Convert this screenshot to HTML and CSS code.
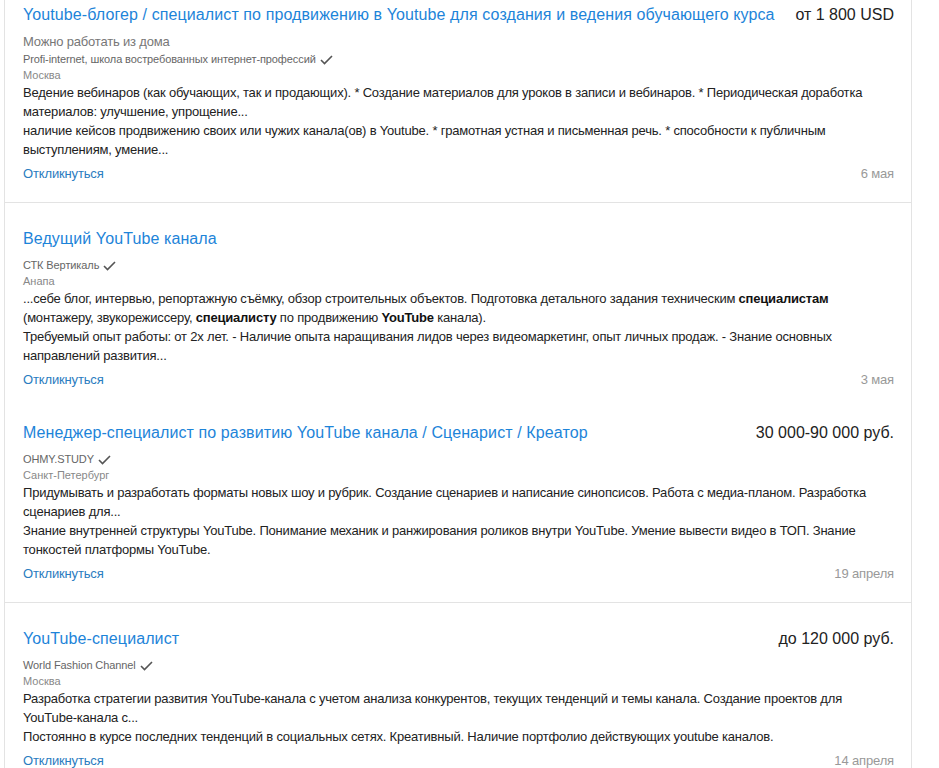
FILE: index.html
```html
<!DOCTYPE html>
<html lang="ru">
<head>
<meta charset="utf-8">
<title>Вакансии</title>
<link rel="stylesheet" href="styles.css">
</head>
<body>
<div class="list">
  <div class="item item--first">
    <div class="head">
      <a class="title" href="#">Youtube-блогер / специалист по продвижению в Youtube для создания и ведения обучающего курса</a>
      <span class="salary">от 1 800 USD</span>
    </div>
    <div class="remote">Можно работать из дома</div>
    <div class="company">Profi-internet, школа востребованных интернет-профессий <svg class="check" width="13" height="10" viewBox="0 0 13 10"><polyline points="1,5 4.5,8.5 12,1" fill="none" stroke="#555" stroke-width="1.6"/></svg></div>
    <div class="city">Москва</div>
    <p class="text">Ведение вебинаров (как обучающих, так и продающих). * Создание материалов для уроков в записи и вебинаров. * Периодическая доработка материалов: улучшение, упрощение...</p>
    <p class="text">наличие кейсов продвижению своих или чужих канала(ов) в Youtube. * грамотная устная и письменная речь. * способности к публичным выступлениям, умение...</p>
    <div class="foot">
      <a class="respond" href="#">Откликнуться</a>
      <span class="date">6 мая</span>
    </div>
  </div>

  <div class="item item--joined">
    <div class="head">
      <a class="title" href="#">Ведущий YouTube канала</a>
    </div>
    <div class="company">СТК Вертикаль <svg class="check" width="13" height="10" viewBox="0 0 13 10"><polyline points="1,5 4.5,8.5 12,1" fill="none" stroke="#555" stroke-width="1.6"/></svg></div>
    <div class="city">Анапа</div>
    <p class="text">...себе блог, интервью, репортажную съёмку, обзор строительных объектов. Подготовка детального задания техническим <b>специалистам</b> (монтажеру, звукорежиссеру, <b>специалисту</b> по продвижению <b>YouTube</b> канала).</p>
    <p class="text">Требуемый опыт работы: от 2х лет. - Наличие опыта наращивания лидов через видеомаркетинг, опыт личных продаж. - Знание основных направлений развития...</p>
    <div class="foot">
      <a class="respond" href="#">Откликнуться</a>
      <span class="date">3 мая</span>
    </div>
  </div>

  <div class="item">
    <div class="head">
      <a class="title" href="#">Менеджер-специалист по развитию YouTube канала / Сценарист / Креатор</a>
      <span class="salary">30 000-90 000 руб.</span>
    </div>
    <div class="company">OHMY.STUDY <svg class="check" width="13" height="10" viewBox="0 0 13 10"><polyline points="1,5 4.5,8.5 12,1" fill="none" stroke="#555" stroke-width="1.6"/></svg></div>
    <div class="city">Санкт-Петербург</div>
    <p class="text">Придумывать и разработать форматы новых шоу и рубрик. Создание сценариев и написание синопсисов. Работа с медиа-планом. Разработка сценариев для...</p>
    <p class="text">Знание внутренней структуры YouTube. Понимание механик и ранжирования роликов внутри YouTube. Умение вывести видео в ТОП. Знание тонкостей платформы YouTube.</p>
    <div class="foot">
      <a class="respond" href="#">Откликнуться</a>
      <span class="date">19 апреля</span>
    </div>
  </div>

  <div class="item">
    <div class="head">
      <a class="title" href="#">YouTube-специалист</a>
      <span class="salary">до 120 000 руб.</span>
    </div>
    <div class="company">World Fashion Channel <svg class="check" width="13" height="10" viewBox="0 0 13 10"><polyline points="1,5 4.5,8.5 12,1" fill="none" stroke="#555" stroke-width="1.6"/></svg></div>
    <div class="city">Москва</div>
    <p class="text">Разработка стратегии развития YouTube-канала с учетом анализа конкурентов, текущих тенденций и темы канала. Создание проектов для YouTube-канала с...</p>
    <p class="text">Постоянно в курсе последних тенденций в социальных сетях. Креативный. Наличие портфолио действующих youtube каналов.</p>
    <div class="foot">
      <a class="respond" href="#">Откликнуться</a>
      <span class="date">14 апреля</span>
    </div>
  </div>
</div>
</body>
</html>
```

FILE: styles.css
```css
html, body {
  margin: 0;
  padding: 0;
  background: #fff;
}

body {
  font-family: "Liberation Sans", Arial, sans-serif;
  color: #222;
}

.list {
  margin-left: 4px;
  width: 906px;
  border-left: 1px solid #e3e3e3;
  border-right: 1px solid #e3e3e3;
}

.item {
  padding: 26px 17px 19px 18px;
  border-bottom: 1px solid #e3e3e3;
}

.item--first {
  padding-top: 5px;
}

.item--joined {
  border-bottom: none;
  padding-bottom: 8px;
}

.head {
  display: flex;
  justify-content: space-between;
  align-items: flex-start;
  gap: 20px;
  margin-bottom: 8px;
}

.title {
  font-size: 16px;
  line-height: 20px;
  letter-spacing: 0.1px;
  color: #1d84d9;
  text-decoration: none;
}

.salary {
  flex-shrink: 0;
  font-size: 16px;
  line-height: 20px;
  color: #222;
}

.remote {
  font-size: 13px;
  line-height: 18px;
  letter-spacing: -0.18px;
  color: #777;
}

.company {
  font-size: 11px;
  line-height: 17px;
  letter-spacing: -0.1px;
  color: #666;
  display: flex;
  align-items: center;
  gap: 4px;
}

.check {
  display: block;
}

.city {
  font-size: 11px;
  line-height: 15px;
  color: #888;
}

.text {
  margin: 0;
  font-size: 13px;
  line-height: 19px;
  letter-spacing: -0.2px;
  color: #222;
}

.text b {
  font-weight: bold;
  color: #111;
}

.foot {
  display: flex;
  justify-content: space-between;
  align-items: center;
  margin-top: 6px;
  font-size: 13px;
  line-height: 18px;
  letter-spacing: -0.15px;
}

.respond {
  color: #2a7cc0;
  text-decoration: none;
}

.date {
  color: #999;
}
```
